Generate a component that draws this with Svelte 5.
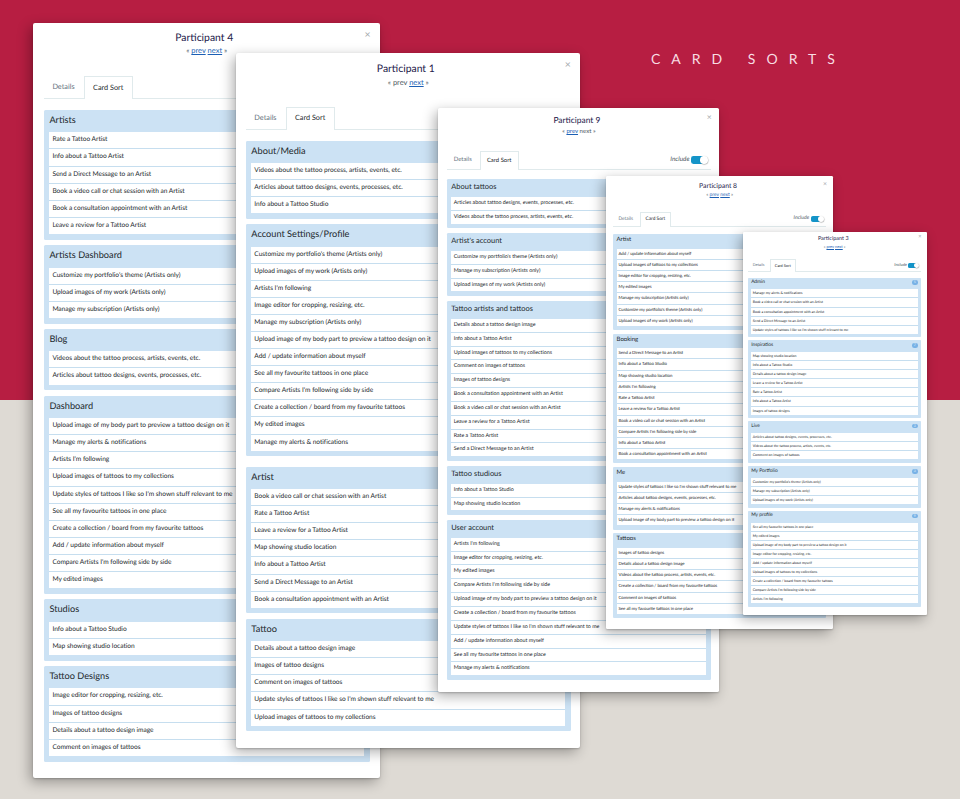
<script>
  const artistOnly = '(Artists only)';
  const sheets = [
    {
      name: 'Participant 4', x: 33.3, y: 23, w: 346.9, h: 754.5, u: 1, side: 10.7, lead: 87.2, pad: 8.3, shift: -5, prev: true, next: true, include: false, pills: false,
      groups: [
        { title: 'Artists', cards: ['Rate a Tattoo Artist', 'Info about a Tattoo Artist', 'Send a Direct Message to an Artist', 'Book a video call or chat session with an Artist', 'Book a consultation appointment with an Artist', 'Leave a review for a Tattoo Artist'] },
        { title: 'Artists Dashboard', cards: [`Customize my portfolio's theme ${artistOnly}`, `Upload images of my work ${artistOnly}`, `Manage my subscription ${artistOnly}`] },
        { title: 'Blog', cards: ['Videos about the tattoo process, artists, events, etc.', 'Articles about tattoo designs, events, processes, etc.'] },
        { title: 'Dashboard', cards: ['Upload image of my body part to preview a tattoo design on it', 'Manage my alerts & notifications', "Artists I'm following", 'Upload images of tattoos to my collections', "Update styles of tattoos I like so I'm shown stuff relevant to me", 'See all my favourite tattoos in one place', 'Create a collection / board from my favourite tattoos', 'Add / update information about myself', "Compare Artists I'm following side by side", 'My edited images'] },
        { title: 'Studios', cards: ['Info about a Tattoo Studio', 'Map showing studio location'] },
        { title: 'Tattoo Designs', cards: ['Image editor for cropping, resizing, etc.', 'Images of tattoo designs', 'Details about a tattoo design image', 'Comment on images of tattoos'] }
      ]
    },
    {
      name: 'Participant 1', x: 236.1, y: 53.3, w: 344.4, h: 694.5, u: 0.999, side: 9.9, lead: 87.5, pad: 9.6, shift: -5, prev: false, next: true, include: false, pills: false,
      groups: [
        { title: 'About/Media', cards: ['Videos about the tattoo process, artists, events, etc.', 'Articles about tattoo designs, events, processes, etc.', 'Info about a Tattoo Studio'] },
        { title: 'Account Settings/Profile', extra: 5, cards: [`Customize my portfolio's theme ${artistOnly}`, `Upload images of my work ${artistOnly}`, "Artists I'm following", 'Image editor for cropping, resizing, etc.', `Manage my subscription ${artistOnly}`, 'Upload image of my body part to preview a tattoo design on it', 'Add / update information about myself', 'See all my favourite tattoos in one place', "Compare Artists I'm following side by side", 'Create a collection / board from my favourite tattoos', 'My edited images', 'Manage my alerts & notifications'] },
        { title: 'Artist', cards: ['Book a video call or chat session with an Artist', 'Rate a Tattoo Artist', 'Leave a review for a Tattoo Artist', 'Map showing studio location', 'Info about a Tattoo Artist', 'Send a Direct Message to an Artist', 'Book a consultation appointment with an Artist'] },
        { title: 'Tattoo', cards: ['Details about a tattoo design image', 'Images of tattoo designs', 'Comment on images of tattoos', "Update styles of tattoos I like so I'm shown stuff relevant to me", 'Upload images of tattoos to my collections'] }
      ]
    },
    {
      name: 'Participant 9', x: 438.3, y: 107.6, w: 281.2, h: 584.6, u: 0.8104, side: 10.7, lead: 88, pad: 9.6, shift: -5, prev: true, next: false, include: true, pills: false,
      groups: [
        { title: 'About tattoos', cards: ['Articles about tattoo designs, events, processes, etc.', 'Videos about the tattoo process, artists, events, etc.'] },
        { title: "Artist's account", cards: [`Customize my portfolio's theme ${artistOnly}`, `Manage my subscription ${artistOnly}`, `Upload images of my work ${artistOnly}`] },
        { title: 'Tattoo artists and tattoos', cards: ['Details about a tattoo design image', 'Info about a Tattoo Artist', 'Upload images of tattoos to my collections', 'Comment on images of tattoos', 'Images of tattoo designs', 'Book a consultation appointment with an Artist', 'Book a video call or chat session with an Artist', 'Leave a review for a Tattoo Artist', 'Rate a Tattoo Artist', 'Send a Direct Message to an Artist'] },
        { title: 'Tattoo studious', cards: ['Info about a Tattoo Studio', 'Map showing studio location'] },
        { title: 'User account', cards: ["Artists I'm following", 'Image editor for cropping, resizing, etc.', 'My edited images', "Compare Artists I'm following side by side", 'Upload image of my body part to preview a tattoo design on it', 'Create a collection / board from my favourite tattoos', "Update styles of tattoos I like so I'm shown stuff relevant to me", 'Add / update information about myself', 'See all my favourite tattoos in one place', 'Manage my alerts & notifications'] }
      ]
    },
    {
      name: 'Participant 8', x: 606, y: 176.3, w: 227.4, h: 452.5, u: 0.6555, side: 10.7, lead: 88, pad: 8.8, shift: -5, prev: true, next: true, include: true, pills: false,
      groups: [
        { title: 'Artist', cards: ['Add / update information about myself', 'Upload images of tattoos to my collections', 'Image editor for cropping, resizing, etc.', 'My edited images', `Manage my subscription ${artistOnly}`, `Customize my portfolio's theme ${artistOnly}`, `Upload images of my work ${artistOnly}`] },
        { title: 'Booking', cards: ['Send a Direct Message to an Artist', 'Info about a Tattoo Studio', 'Map showing studio location', "Artists I'm following", 'Rate a Tattoo Artist', 'Leave a review for a Tattoo Artist', 'Book a video call or chat session with an Artist', "Compare Artists I'm following side by side", 'Info about a Tattoo Artist', 'Book a consultation appointment with an Artist'] },
        { title: 'Me', cards: ["Update styles of tattoos I like so I'm shown stuff relevant to me", 'Articles about tattoo designs, events, processes, etc.', 'Manage my alerts & notifications', 'Upload image of my body part to preview a tattoo design on it'] },
        { title: 'Tattoos', cards: ['Images of tattoo designs', 'Details about a tattoo design image', 'Videos about the tattoo process, artists, events, etc.', 'Create a collection / board from my favourite tattoos', 'Comment on images of tattoos', 'See all my favourite tattoos in one place'] }
      ]
    },
    {
      name: 'Participant 3', x: 742.6, y: 231.5, w: 184, h: 383.8, u: 0.531, side: 10.7, lead: 86.8, pad: 9.2, shift: -5, prev: true, next: true, include: true, pills: true,
      groups: [
        { title: 'Admin', cards: ['Manage my alerts & notifications', 'Book a video call or chat session with an Artist', 'Book a consultation appointment with an Artist', 'Send a Direct Message to an Artist', "Update styles of tattoos I like so I'm shown stuff relevant to me"] },
        { title: 'Inspiratios', cards: ['Map showing studio location', 'Info about a Tattoo Studio', 'Details about a tattoo design image', 'Leave a review for a Tattoo Artist', 'Rate a Tattoo Artist', 'Info about a Tattoo Artist', 'Images of tattoo designs'] },
        { title: 'Live', extra: 1.2, cards: ['Articles about tattoo designs, events, processes, etc.', 'Videos about the tattoo process, artists, events, etc.', 'Comment on images of tattoos'] },
        { title: 'My Portfolio', cards: [`Customize my portfolio's theme ${artistOnly}`, `Manage my subscription ${artistOnly}`, `Upload images of my work ${artistOnly}`] },
        { title: 'My profile', cards: ['See all my favourite tattoos in one place', 'My edited images', 'Upload image of my body part to preview a tattoo design on it', 'Image editor for cropping, resizing, etc.', 'Add / update information about myself', 'Upload images of tattoos to my collections', 'Create a collection / board from my favourite tattoos', "Compare Artists I'm following side by side", "Artists I'm following"] }
      ]
    }
  ];
</script>

<main class="board">
  <h1>CARD SORTS</h1>
  {#each sheets as s}
    <article
      class="sheet"
      style="left:{s.x}px;top:{s.y}px;width:{s.w}px;height:{s.h}px;--u:{s.u}px;--side:{s.side};--lead:{s.lead};--pad:{s.pad}"
    >
      <span class="close">×</span>
      <header>
        <h2 style="margin-left:calc(var(--u) * {s.shift})">{s.name}</h2>
        <nav>
          « <span class:link={s.prev}>prev</span> <span class:link={s.next}>next</span> »
        </nav>
      </header>
      <div class="tabs">
        <span class="tab">Details</span>
        <span class="tab active">Card Sort</span>
        {#if s.include}
          <span class="include"><i>Include</i><span class="switch"><b></b></span></span>
        {/if}
      </div>
      {#each s.groups as g}
        <section style="margin-bottom:calc(var(--u) * {5.6 + (g.extra ?? 0)})">
          <h3>
            <span>{g.title}</span>
            {#if s.pills}<span class="pill">{g.cards.length}</span>{/if}
          </h3>
          <ul>
            {#each g.cards as c}<li>{c}</li>{/each}
          </ul>
        </section>
      {/each}
    </article>
  {/each}
</main>

<style>
  :global(body) { margin: 0; }
  .board {
    position: relative;
    width: 960px;
    height: 799px;
    overflow: hidden;
    background: linear-gradient(#b71e42 0 400px, #dedad4 400px);
    font-family: Lato, "Liberation Sans", sans-serif;
    text-rendering: geometricPrecision;
    color: #22282c;
  }
  h1, h2, h3, ul { margin: 0; padding: 0; font-weight: 400; }
  h1 {
    position: absolute;
    left: 651px;
    top: 49.5px;
    font-size: 14px;
    line-height: 18px;
    letter-spacing: 11px;
    white-space: nowrap;
    color: #f8dde3;
  }
  .sheet {
    position: absolute;
    box-sizing: border-box;
    padding: 0 calc(var(--u) * var(--side));
    background: #fff;
    border-radius: calc(var(--u) * 2);
    box-shadow: -3px 4px 13px rgba(0, 0, 0, .32), 0 1px 2px rgba(0, 0, 0, .2);
  }
  header {
    height: calc(var(--u) * (var(--lead) - 34.2));
    text-align: center;
    box-sizing: border-box;
    padding-top: calc(var(--u) * var(--pad));
  }
  h2 {
    font-size: calc(var(--u) * 10.4);
    line-height: calc(var(--u) * 14);
    color: #24204a;
  }
  nav {
    font-size: calc(var(--u) * 7.5);
    line-height: calc(var(--u) * 12.6);
    color: #4c5862;
  }
  .link { color: #1c5fb4; text-decoration: underline; }
  .close {
    position: absolute;
    right: calc(var(--u) * 9.6);
    top: calc(var(--u) * 7);
    font-size: calc(var(--u) * 10.5);
    line-height: calc(var(--u) * 11);
    color: #a5a9ad;
  }
  .tabs {
    display: flex;
    height: calc(var(--u) * 23.2);
    margin-bottom: calc(var(--u) * 11);
    box-sizing: border-box;
    border-bottom: 1px solid #e0eaec;
    font-size: calc(var(--u) * 7.3);
    line-height: calc(var(--u) * 22);
  }
  .tab { padding: 0 calc(var(--u) * 8.4); color: #66737e; box-sizing: border-box; width: calc(var(--u) * 40.5); white-space: nowrap; }
  .active {
    width: calc(var(--u) * 48.5);
    height: calc(var(--u) * 23.2);
    padding: 0 calc(var(--u) * 7.6);
    border: 1px solid #e0eaec;
    border-bottom: 0;
    background: #fff;
    color: #22282c;
    line-height: calc(var(--u) * 21);
  }
  .include {
    display: flex;
    align-items: center;
    gap: calc(var(--u) * 2.4);
    margin-left: auto;
    padding-right: calc(var(--u) * 4);
    font-size: calc(var(--u) * 7.9);
    color: #4c5862;
  }
  .switch {
    display: flex;
    justify-content: flex-end;
    align-items: center;
    width: calc(var(--u) * 20);
    height: calc(var(--u) * 9.4);
    border-radius: calc(var(--u) * 3) calc(var(--u) * 5) calc(var(--u) * 5) calc(var(--u) * 3);
    background: linear-gradient(90deg, #1494c8 70%, transparent 70%);
  }
  .switch b {
    width: calc(var(--u) * 9.4);
    height: calc(var(--u) * 9.4);
    border-radius: 50%;
    background: #fff;
    box-shadow: .3px .5px 1px rgba(0, 0, 0, .38);
  }
  section {
    padding: 0 calc(var(--u) * 5.4) calc(var(--u) * 4.8);
    background: #cce2f4;
    border-radius: calc(var(--u) * 1.5);
  }
  h3 {
    display: flex;
    justify-content: space-between;
    align-items: center;
    height: calc(var(--u) * 22.2);
    padding-bottom: calc(var(--u) * 3.2);
    box-sizing: border-box;
    font-size: calc(var(--u) * 9.2);
    line-height: 1;
  }
  .pill {
    width: calc(var(--u) * 12);
    height: calc(var(--u) * 8.4);
    border-radius: calc(var(--u) * 4.2);
    background: #78b2e6;
    color: #e8f3fc;
    font-size: calc(var(--u) * 6.6);
    line-height: calc(var(--u) * 8.4);
    text-align: center;
  }
  ul { list-style: none; }
  li {
    box-sizing: border-box;
    height: calc(var(--u) * 17.1);
    padding-left: calc(var(--u) * 3);
    border-bottom: max(1px, calc(var(--u) * 1.3)) solid #c6deef;
    background: #fff;
    font-size: calc(var(--u) * 6.6);
    letter-spacing: calc(var(--u) * -.03);
    line-height: calc(var(--u) * 15.6);
    white-space: nowrap;
  }
  li:last-child { border-bottom-color: #cce2f4; }
</style>
